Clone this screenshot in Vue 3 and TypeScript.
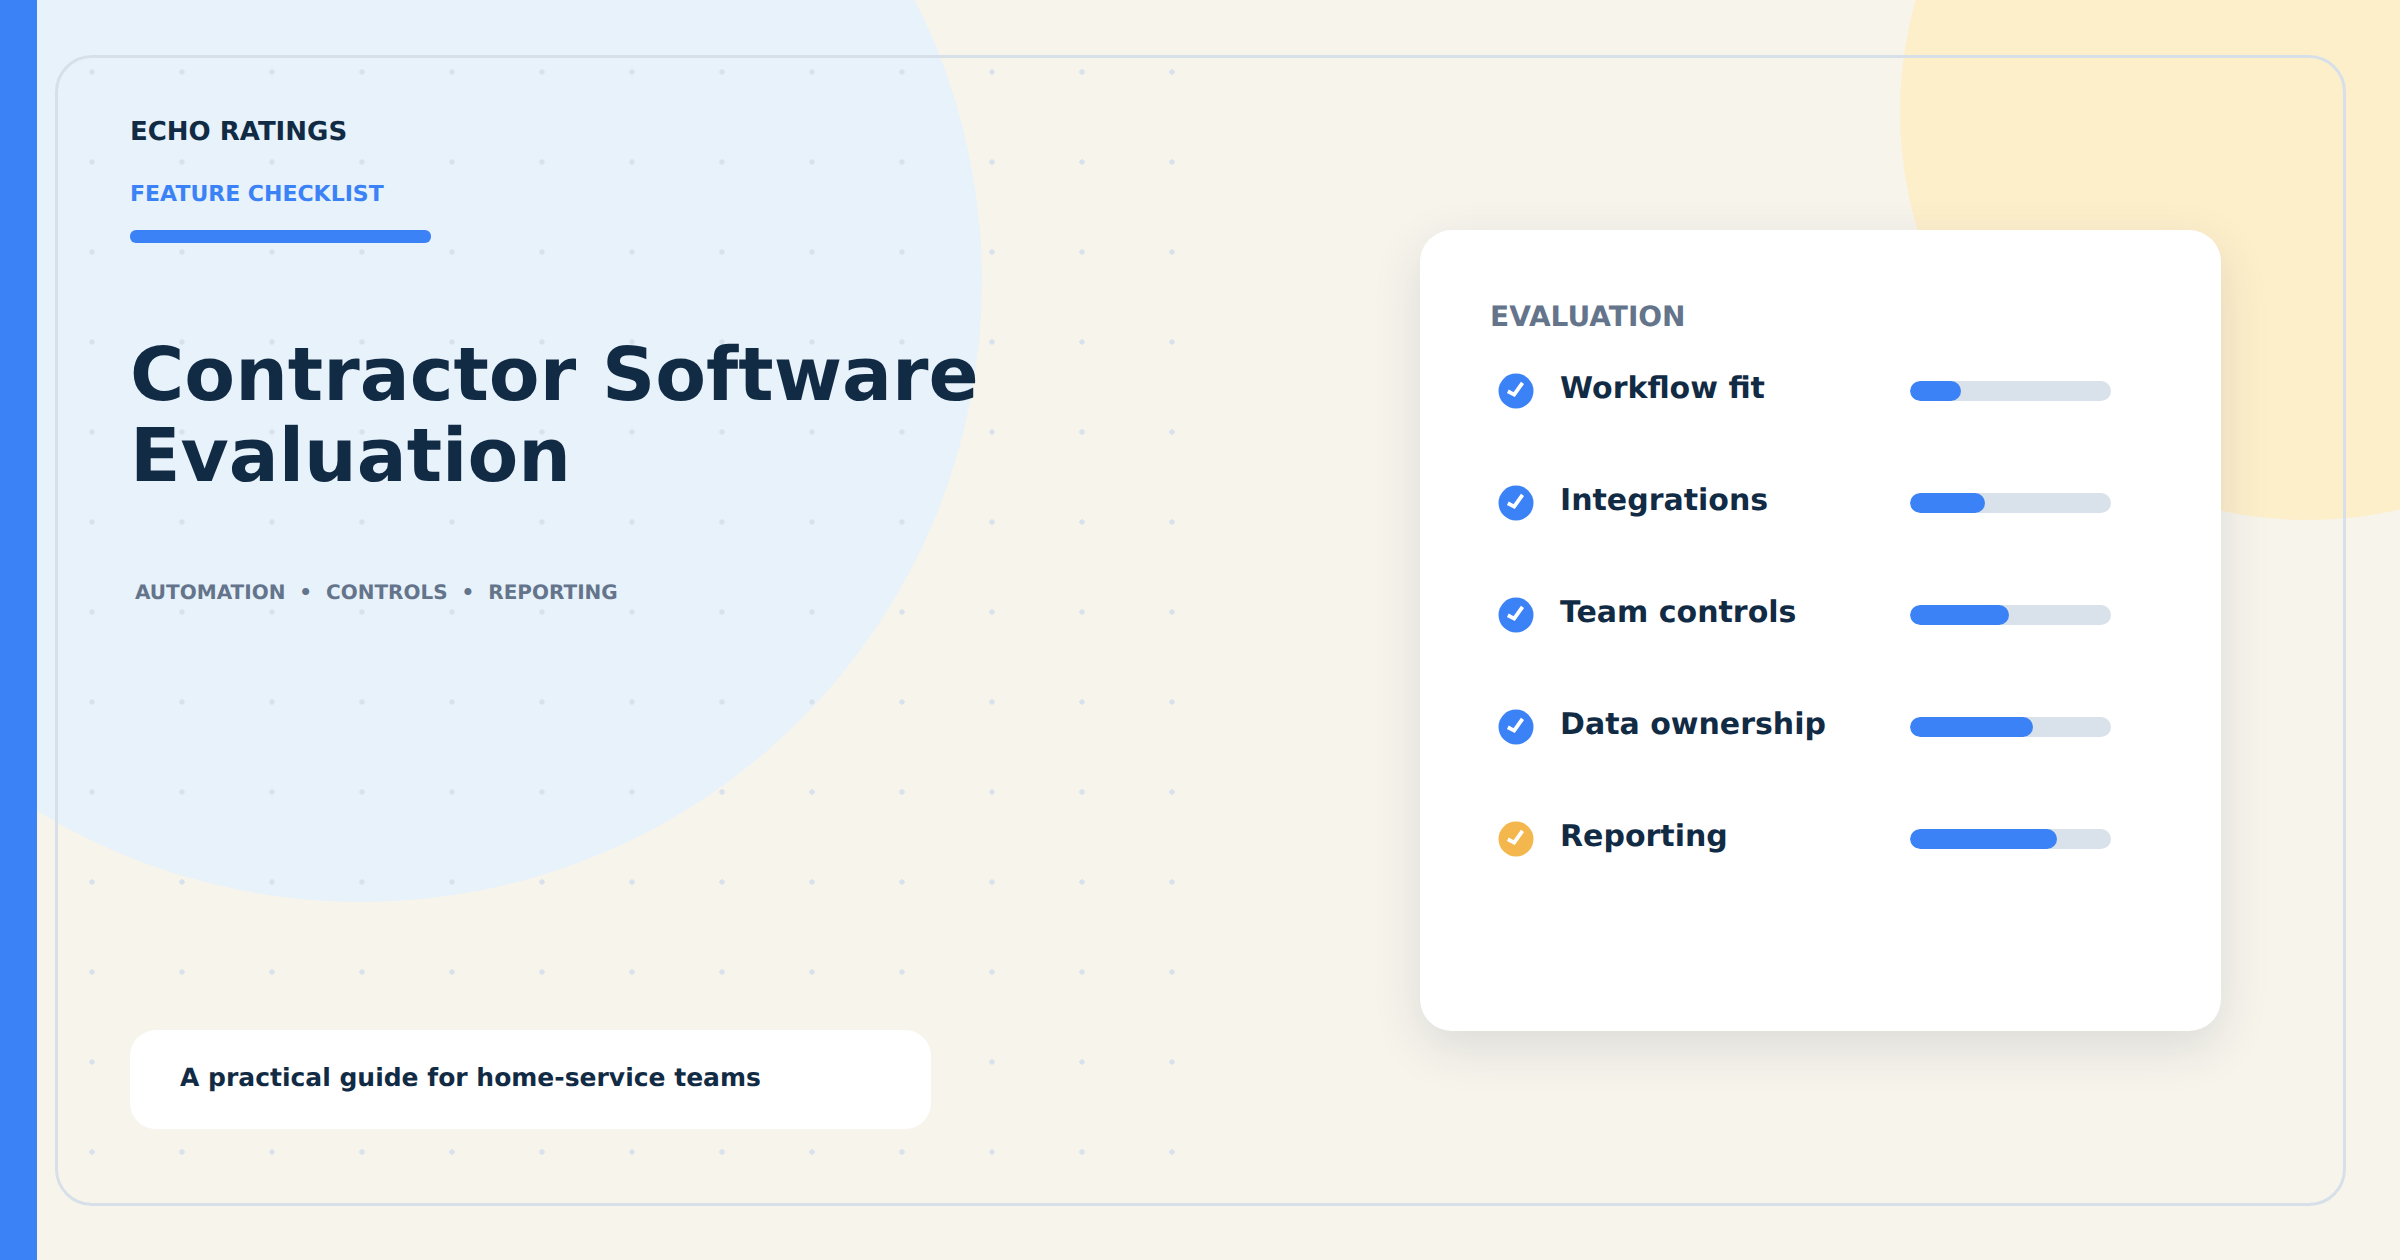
<template>
  <div class="page">
    <div class="blob blob-blue"></div>
    <div class="blob blob-yellow"></div>
    <div class="dots"></div>

    <div class="stripe"></div>

    <main class="frame">
      <section class="intro">
        <div class="brand">ECHO RATINGS</div>
        <div class="kicker">FEATURE CHECKLIST</div>
        <div class="kicker-bar"></div>
        <h1 class="title">Contractor Software<br />Evaluation</h1>
        <p class="tags">{{ tags }}</p>
        <div class="pill">A practical guide for home-service teams</div>
      </section>

      <section class="card">
        <h2 class="card-title">EVALUATION</h2>
        <ul class="rows">
          <li v-for="row in rows" :key="row.label" class="row">
            <svg class="check" viewBox="0 0 36 36" aria-hidden="true">
              <circle cx="18" cy="18" r="17.5" :fill="row.color" />
              <path
                d="M9.8 18.2 L16.2 21.6 L24.5 9.8"
                fill="none"
                stroke="#fff"
                stroke-width="3.8"
              />
            </svg>
            <span class="label">{{ row.label }}</span>
            <div class="track">
              <div class="fill" :style="{ width: row.fill + 'px' }"></div>
            </div>
          </li>
        </ul>
      </section>
    </main>
  </div>
</template>

<script setup lang="ts">
interface Row {
  label: string
  fill: number
  color: string
}

const blue = '#3b82f6'
const amber = '#f4b74e'

// double spaces around the bullets are kept by white-space: pre
const tags = 'AUTOMATION  •  CONTROLS  •  REPORTING'

const rows: Row[] = [
  { label: 'Workflow fit', fill: 51, color: blue },
  { label: 'Integrations', fill: 75, color: blue },
  { label: 'Team controls', fill: 99, color: blue },
  { label: 'Data ownership', fill: 123, color: blue },
  { label: 'Reporting', fill: 147, color: amber }
]
</script>

<style>
html,
body {
  margin: 0;
  background: #f7f4ec;
}
</style>

<style scoped>
.page {
  position: relative;
  display: flex;
  width: 2400px;
  height: 1260px;
  overflow: hidden;
  background: #f7f4ec;
  color: #122b45;
  font-family: "DejaVu Sans", sans-serif;
  text-rendering: geometricPrecision;
}

.blob {
  position: absolute;
  border-radius: 50%;
}

.blob-blue {
  left: -260px;
  top: -340px;
  width: 1242px;
  height: 1242px;
  background: #e7f2fb;
}

.blob-yellow {
  left: 1900px;
  top: -296px;
  width: 816px;
  height: 816px;
  background: #feefcb;
}

.dots {
  position: absolute;
  left: 47px;
  top: 27px;
  width: 1170px;
  height: 1170px;
  background: radial-gradient(circle at 45px 45px, #d9e2ec 2.4px, transparent 3px) 0 0 / 90px 90px;
}

.stripe {
  position: relative;
  flex: none;
  width: 37px;
  background: #3b82f6;
}

.frame {
  position: relative;
  display: flex;
  flex: 1;
  justify-content: space-between;
  margin: 55px 54px 54px 18px;
  padding: 58px 122px 74px 72px;
  border: 3px solid #d7e0e8;
  border-radius: 37px;
}

.intro {
  display: flex;
  flex-direction: column;
  align-items: flex-start;
}

.brand {
  font-size: 26px;
  line-height: 32px;
  font-weight: 700;
}

.kicker {
  margin-top: 33px;
  font-size: 22px;
  line-height: 28px;
  font-weight: 700;
  color: #3b82f6;
}

.kicker-bar {
  width: 301px;
  height: 13px;
  margin-top: 21px;
  border-radius: 6px;
  background: #3b82f6;
}

.title {
  margin: 92px 0 0;
  font-size: 74px;
  line-height: 81px;
  font-weight: 700;
}

.tags {
  margin: 82px 0 0 5px;
  font-size: 20px;
  line-height: 26px;
  font-weight: 700;
  color: #64748b;
  white-space: pre;
}

.pill {
  display: flex;
  align-items: center;
  box-sizing: border-box;
  width: 801px;
  height: 99px;
  margin-top: auto;
  padding: 0 0 4px 50px;
  border-radius: 26px;
  background: #fff;
  font-size: 25px;
  font-weight: 700;
}

.card {
  box-sizing: border-box;
  width: 801px;
  height: 801px;
  margin-top: 114px;
  padding: 70px 70px;
  border-radius: 32px;
  background: #fff;
  box-shadow: 0 16px 50px rgba(18, 43, 69, 0.12);
}

.card-title {
  margin: 0;
  font-size: 28px;
  line-height: 34px;
  font-weight: 700;
  color: #64748b;
}

.rows {
  display: flex;
  flex-direction: column;
  gap: 76px;
  margin: 39px 0 0;
  padding: 0 0 0 8px;
  list-style: none;
}

.row {
  display: flex;
  align-items: flex-start;
  height: 36px;
}

.check {
  flex: none;
  width: 36px;
  height: 36px;
}

.label {
  flex: none;
  width: 350px;
  margin-left: 26px;
  padding-top: 1px;
  font-size: 30px;
  line-height: 30px;
  font-weight: 700;
}

.track {
  flex: none;
  width: 201px;
  height: 20px;
  margin-top: 8px;
  border-radius: 10px;
  background: #d9e2ea;
  overflow: hidden;
}

.fill {
  height: 100%;
  border-radius: 10px;
  background: #3b82f6;
}
</style>
